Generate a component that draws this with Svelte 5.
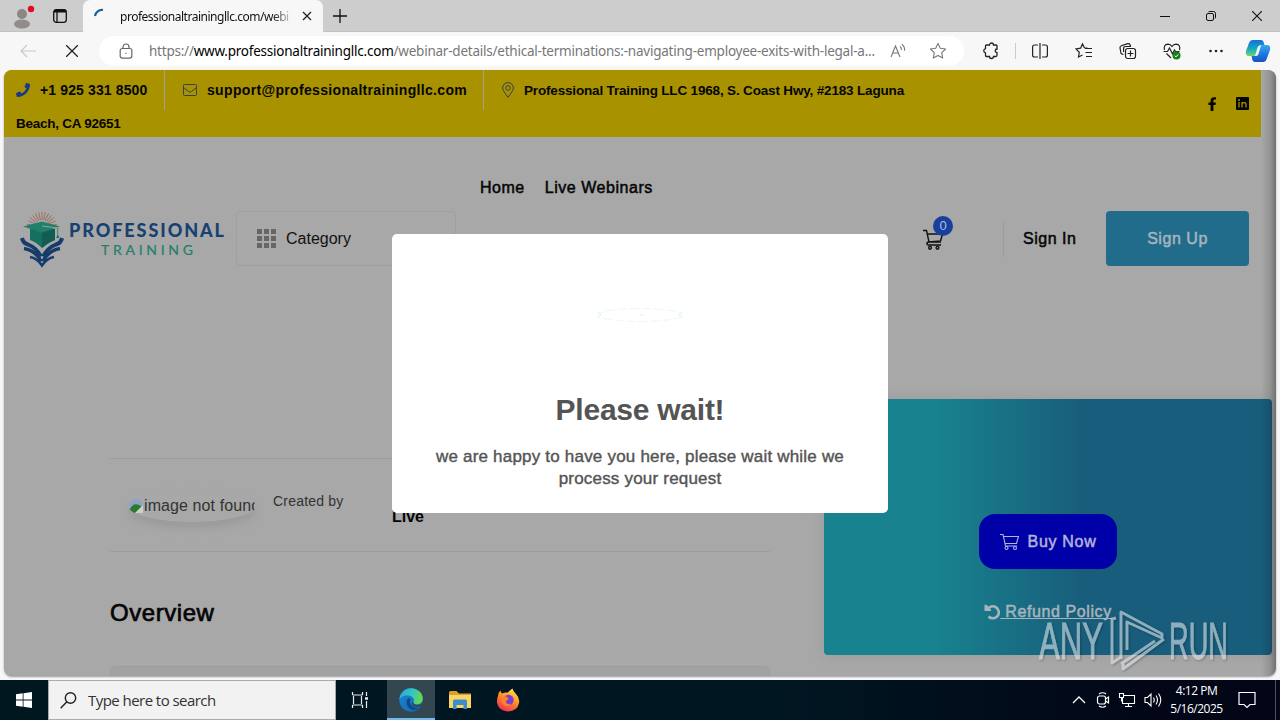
<!-- App.svelte -->
<script>
    const url = {
        host: 'www.professionaltrainingllc.com',
        path: '/webinar-details/ethical-terminations:-navigating-employee-exits-with-legal-a...'
    };

    const nav = [
        { text: 'Home', href: '#home' },
        { text: 'Live Webinars', href: '#webinars' }
    ];

    let cartCount = 0;

    // 3x3 dots of the category button
    const dots = [0, 1, 2, 3, 4, 5, 6, 7, 8];
    // rays above the cap in the logo
    const rays = [-80, -66, -52, -39, -26, -13, 0, 13, 26, 39, 52, 66, 80];
</script>

<div class="screen">
    <div class="tabbar">
        <div class="profile">
            <svg width="24" height="26" viewBox="0 0 24 26">
                <circle cx="10" cy="11" r="5" fill="#8c8684" />
                <ellipse cx="10" cy="21" rx="8" ry="4.500" fill="#918b89" />
                <circle cx="19" cy="6" r="3.200" fill="#e00b1c" />
            </svg>
        </div>
        <svg class="workspaces" width="16" height="16" viewBox="0 0 16 16">
            <rect x="1.700" y="1.700" width="12.600" height="12.600" rx="2.500" fill="none" stroke="#111" stroke-width="1.300" />
            <path d="M2 3.200h12" stroke="#111" stroke-width="2.600" />
            <path d="M5 3v11" stroke="#111" stroke-width="1.300" />
        </svg>
        <div class="tab">
            <svg width="16" height="16" viewBox="0 0 16 16">
                <path d="M2 8a7 7 0 0 1 8-6" fill="none" stroke="#17609a" stroke-width="2.200" />
            </svg>
            <span class="tab-title">professionaltrainingllc.com/webi</span>
            <svg width="10" height="10" viewBox="0 0 10 10"><path d="M1 1l8 8M9 1L1 9" stroke="#222" stroke-width="1.300" /></svg>
        </div>
        <svg class="new-tab" width="14" height="14" viewBox="0 0 14 14"><path d="M7 0v14M0 7h14" stroke="#111" stroke-width="1.300" /></svg>
        <div class="window-buttons">
            <svg width="10" height="10" viewBox="0 0 10 10"><path d="M0 5.500h10" stroke="#111" /></svg>
            <svg width="10" height="10" viewBox="0 0 10 10" fill="none" stroke="#111">
                <rect x=".5" y="2.500" width="7" height="7" rx="1.500" />
                <path d="M2.500.9q.5-.4 1.500-.4h3.500q2 0 2 2V6q0 1-.5 1.500" />
            </svg>
            <svg width="10" height="10" viewBox="0 0 10 10"><path d="M0 0l10 10M10 0L0 10" stroke="#111" stroke-width="1.100" /></svg>
        </div>
    </div>

    <div class="toolbar">
        <svg class="back" width="16" height="14" viewBox="0 0 16 14"><path d="M16 7H1M7 1L1 7l6 6" fill="none" stroke="#c9c9c9" stroke-width="1.200" /></svg>
        <svg class="stop" width="12" height="12" viewBox="0 0 12 12"><path d="M0 0l12 12M12 0L0 12" stroke="#222" stroke-width="1.300" /></svg>
        <div class="address">
            <svg width="14" height="16" viewBox="0 0 14 16" fill="none" stroke="#666" stroke-width="1.200">
                <rect x="1.200" y="5.500" width="11.600" height="9.600" rx="2" />
                <path d="M4 5.500V4a3 3 0 0 1 6 0v1.500" />
                <circle cx="7" cy="10.300" r=".7" fill="#666" stroke="none" />
            </svg>
            <span class="url">https://<b>{url.host}</b>{url.path}</span>
            <svg class="read" width="17" height="16" viewBox="0 0 17 16" fill="none" stroke="#777" stroke-width="1.100">
                <path d="M1 14L5.500 3 10 14M2.700 10h5.600M10 3.500q1.600 1.300 1.500 3.500M11.800 1.200q3.200 2.300 2.800 6.600" />
            </svg>
            <svg class="star" width="18" height="18" viewBox="0 0 18 18"><path d="M9 1.400l2.300 4.900 5.300.7-3.900 3.700 1 5.300L9 13.400 4.300 16l1-5.300L1.400 7l5.300-.7z" fill="none" stroke="#777" stroke-width="1.100" stroke-linejoin="round" /></svg>
        </div>
        <div class="tools">
            <svg width="18" height="18" viewBox="0 0 18 18" fill="none" stroke="#222" stroke-width="1.300">
                <path d="M4.500 3h3a2 2 0 0 1 4 0h2.500q1 0 1 1v3a1.800 1.800 0 0 0 0 3.600V13q0 1.500-1 1.500h-2.500a2 2 0 0 1-4 0h-3q-1 0-1-1v-2.600a2.200 2.200 0 0 1 0-4.300V4q0-1 1-1z" />
            </svg>
            <span class="tool-line"></span>
            <svg width="18" height="18" viewBox="0 0 18 18" fill="none" stroke="#222" stroke-width="1.200">
                <path d="M7 3H3.500Q1.600 3 1.600 5v8q0 2 1.900 2H7M11 3h3.500q1.900 0 1.900 2v8q0 2-1.900 2H11M9 1v16" />
            </svg>
            <svg width="18" height="18" viewBox="0 0 18 18" fill="none" stroke="#222" stroke-width="1.200">
                <path d="M9.500 6L7.500 2 5.600 6.200 1 7l3.300 3.300-.8 4.700 4-2M10 6.500h7M10.500 10.500H17M11 14.500h6M9.500 6h3" />
            </svg>
            <svg width="18" height="18" viewBox="0 0 18 18" fill="none" stroke="#222" stroke-width="1.200">
                <rect x="6.500" y="6.500" width="10" height="10" rx="2.200" />
                <path d="M11.500 8.500v6M8.500 11.500h6M4.500 12.500l-1.800-.6q-1.200-.5-.9-1.800L1 6q-.3-1.700 1.300-2.300l6.500-2q1.500-.4 2.200 1l.6 1.600M4.600 10V6.500q0-2 2-2h5.500" />
            </svg>
            <svg width="18" height="18" viewBox="0 0 18 18" fill="none" stroke="#222" stroke-width="1.200">
                <path d="M1.500 8Q.2 2.500 5 2.200 7.500 2.300 9 4.500q1.500-2.200 4-2.300Q17.800 2.500 16.500 8M3.500 11.500L8 16M.5 9.500h4L6.500 6l3 6 2-4 1 1.500h4" />
                <circle cx="13.500" cy="13.500" r="4" fill="#16801c" stroke="none" />
                <path d="M11.700 13.700l1.300 1.200 2.300-2.500" stroke="#fff" stroke-width="1" />
            </svg>
            <svg class="more" width="18" height="18" viewBox="0 0 18 18" fill="#222">
                <circle cx="3.500" cy="9" r="1.300" /><circle cx="9" cy="9" r="1.300" /><circle cx="14.500" cy="9" r="1.300" />
            </svg>
            <svg class="copilot" width="26" height="24" viewBox="0 0 26 24">
                <defs>
                    <linearGradient id="cp1" x1="0" y1="0" x2="0" y2="1"><stop offset="0" stop-color="#1b6fd0" /><stop offset=".5" stop-color="#12a3c8" /><stop offset="1" stop-color="#6cd66b" /></linearGradient>
                    <linearGradient id="cp2" x1="0" y1="0" x2="0" y2="1"><stop offset="0" stop-color="#3aa9ea" /><stop offset=".5" stop-color="#1f7be5" /><stop offset="1" stop-color="#1654c0" /></linearGradient>
                </defs>
                <path d="M8 1h8q2 0 2.600 2l.8 3h-3q-2 0-2.700 2l-2.500 7q-.8 2-3 2H4q-4 0-3-5L4 4q1-3 4-3z" fill="url(#cp1)" />
                <path d="M18 23h-8q-2 0-2.600-2l-.8-4h2q2.500 0 3.200-2l2.500-7q.8-2 3-2H22q4 0 3 5l-3 8q-1 4-4 4z" fill="url(#cp2)" />
                <path d="M12.500 8.500q.6-2 2.500-2h1l-2.500 8.500q-.6 2-2.500 2h-1z" fill="#e9f6fd" />
            </svg>
        </div>
    </div>

    <div class="page">
        <div class="topbar">
            <div class="contacts">
                <span class="phone">
                    <svg width="14" height="14" viewBox="0 0 512 512"><path fill="#173a8c" d="M493 25L389 1c-11-3-23 3-27 14l-48 112c-4 10-1 22 7 28l61 50c-36 76-98 139-177 177l-50-61c-7-8-18-11-28-7L15 362c-11 4-17 16-14 27l24 104c3 11 12 19 24 19 256 0 463-207 463-464 0-11-8-21-19-23z" /></svg>
                    +1 925 331 8500
                </span>
                <span class="mail">
                    <svg width="14" height="14" viewBox="0 0 14 14" fill="none" stroke="#39404d"><rect x=".5" y="1.500" width="13" height="11" rx="1" /><path d="M.5 4.500L5.500 8.500q1.500 1.200 3 0l5-4" /></svg>
                    support@professionaltrainingllc.com
                </span>
                <span class="pin">
                    <svg width="12" height="16" viewBox="0 0 12 16" fill="none" stroke="#39404d"><path d="M6 15.300Q.6 8.500.6 6a5.400 5.400 0 0 1 10.800 0Q11.400 8.500 6 15.300z" /><circle cx="6" cy="6" r="2.300" /></svg>
                    Professional Training LLC 1968, S. Coast Hwy, #2183 Laguna
                </span>
                <div class="second">Beach, CA 92651</div>
            </div>
            <div class="social">
                <svg width="9" height="14" viewBox="0 0 9 14"><path d="M2.600 14V8H.4V5.400h2.200V3.700Q2.600.2 6 .2h2v2.400H6.700q-1.300 0-1.300 1.300v1.500h2.500L7.500 8H5.400v6z" fill="#050505" /></svg>
                <svg width="13" height="13" viewBox="0 0 13 13">
                    <rect width="13" height="13" rx="1" fill="#050505" />
                    <path d="M3 5v5.500M6 5v5.500M6 7.500q0-1.800 2-1.800t2 1.800v3" fill="none" stroke="#a89200" stroke-width="1.300" />
                    <circle cx="3" cy="2.900" r="1" fill="#a89200" />
                </svg>
            </div>
        </div>

        <header>
            <svg class="logo" width="206" height="58" viewBox="0 0 206 58">
                <g stroke="#a06a5c" stroke-width=".9">
                    {#each rays as angle}
                        <path d="M22 2V10" transform="rotate({angle} 22 17)" />
                    {/each}
                </g>
                <path d="M10 19v11q6 2 12 8 7-6 13-8V19z" fill="#17705f" />
                <path d="M22 23v15q7-6 13-8V19z" fill="#125c54" />
                <path d="M3 16.500l19-5 18 5-18 6z" fill="#20806c" />
                <path d="M22 16l15.500 2v9" fill="none" stroke="#8fae9f" stroke-width=".9" />
                <path d="M37.500 18v7l-1.300 3h3l-1-3v-7z" fill="#17705f" />
                <g fill="none" stroke="#173c6b" stroke-width="4">
                    <path d="M2 28q1 5 6 6.500 8 3 13 12" />
                    <path d="M42 28q-1 5-6 6.500-8 3-13 12" />
                    <path d="M4 38.500q12 2 17 13" stroke-width="3.500" />
                    <path d="M40 38.500q-12 2-17 13" stroke-width="3.500" />
                    <path d="M10 47q7 1 12 8.500 5-7.500 12-8.500" stroke-width="2.500" />
                </g>
                <text x="49" y="26.500" class="logo-top" textLength="155">PROFESSIONAL</text>
                <text x="81" y="45" class="logo-sub" textLength="92">TRAINING</text>
            </svg>
            <button class="category">
                <span class="dots">{#each dots as dot}<i></i>{/each}</span>
                Category
            </button>
            <nav>
                {#each nav as item}
                    <a href={item.href}>{item.text}</a>
                {/each}
            </nav>
            <div class="cart">
                <svg width="21" height="22" viewBox="0 0 21 22" fill="none" stroke="#111" stroke-width="1.400">
                    <path d="M0 2.500h3.500L6 14h12M4.200 6h15.300l-2 7L5.700 14q-2 .3-1.800 1.900.1 1.100 1.600 1.100H18" />
                    <circle cx="7" cy="19.800" r="1.400" /><circle cx="14.500" cy="19.800" r="1.400" />
                </svg>
                <span class="badge">{cartCount}</span>
            </div>
            <div class="account">
                <span class="signin">Sign In</span>
                <button class="signup">Sign Up</button>
            </div>
        </header>

        <main>
            <section class="course">
                <div class="meta">
                    <div class="avatar">
                        <svg width="16" height="16" viewBox="0 0 16 16">
                            <path d="M1 1h10l4 4v10H1z" fill="#8fa3c4" />
                            <path d="M1 13Q5 3 13 8l2 2-5 5H1z" fill="#2c7a2e" />
                            <path d="M15 7l-8 8h8z" fill="#c9d4c6" />
                        </svg><span>image not found</span>
                    </div>
                    <span class="created">Created by</span>
                    <strong>Live</strong>
                </div>
                <h3>Overview</h3>
                <div class="panel"></div>
            </section>
            <aside>
                <button class="buy">
                    <svg width="19" height="18" viewBox="0 0 19 18" fill="none" stroke="#b3b3d8" stroke-width="1.100">
                        <path d="M0 1.500h3l2.500 11.500H17M3.500 3.500h15l-2 7H5" /><circle cx="6.500" cy="15" r="1.500" /><circle cx="15" cy="15" r="1.500" />
                    </svg>
                    Buy Now
                </button>
                <a class="refund" href="#refund">
                    <svg width="16" height="16" viewBox="0 0 16 16"><path d="M3.500 5.500A6 6 0 1 1 4.500 12.500" fill="none" stroke="#a7b4bc" stroke-width="2.600" /><path d="M.5.800V7H7V5.500L2.500.8z" fill="#a7b4bc" /></svg><span>&nbsp;Refund Policy</span>
                </a>
            </aside>
        </main>

        <div class="edge-shadow"></div>

        <div class="modal">
            <svg width="92" height="18" viewBox="0 0 92 18" fill="none" stroke="#e9f9f9">
                <ellipse cx="46" cy="9" rx="42" ry="6.500" stroke-dasharray="9 3" />
                <path d="M4 6l3 3-3 3M88 6l-3 3 3 3M46 9h4" stroke="#d8f3f4" />
            </svg>
            <h2>Please wait!</h2>
            <p>we are happy to have you here, please wait while we process your request</p>
        </div>
    </div>

    <svg class="watermark" width="196" height="64" viewBox="0 0 196 64">
        <text x="2" y="50.500" textLength="64" lengthAdjust="spacingAndGlyphs">ANY</text>
        <g fill="none" stroke="#dbe4e8" stroke-width="3" stroke-linejoin="round">
            <path d="M79 10l-4 1v44l9-6" />
            <path d="M84 51V4l41 22v4l-35-16v28M86 56v5l41-30M84 56l34-23" />
        </g>
        <text x="132" y="50.500" textLength="59" lengthAdjust="spacingAndGlyphs">RUN</text>
    </svg>

    <div class="taskbar">
        <div class="start">
            <svg width="16" height="16" viewBox="0 0 16 16" fill="#fff"><path d="M0 2.300L6.700 1.300v6.300H0zM7.500 1.200L16 0v7.600H7.500zM0 8.400h6.700v6.300L0 13.700zM7.500 8.400H16V16l-8.500-1.200z" /></svg>
        </div>
        <div class="search">
            <svg width="17" height="17" viewBox="0 0 17 17" fill="none" stroke="#222" stroke-width="1.400"><circle cx="10.500" cy="6" r="5.200" /><path d="M6.800 9.800L.7 16.200" /></svg>
            Type here to search
        </div>
        <div class="task">
            <svg width="18" height="18" viewBox="0 0 18 18" fill="none" stroke="#e8eef0" stroke-width="1.200"><path d="M1.500 1v3M11.500 1v3M1.500 4h10M1.500 17v-3M11.500 17v-3M1.500 14h10M2.500 5v8M10.500 5v8M15.500 1v4M15.500 10v7" /><path d="M14 7.500h3" stroke-width="2.500" /></svg>
        </div>
        <div class="task active">
            <svg width="24" height="24" viewBox="0 0 24 24">
                <defs>
                    <linearGradient id="eg1" x1="0" y1="0" x2="1" y2=".2"><stop offset="0" stop-color="#2aa5dc" /><stop offset=".6" stop-color="#35c6c0" /><stop offset="1" stop-color="#64d850" /></linearGradient>
                    <linearGradient id="eg2" x1="0" y1="0" x2="1" y2="1"><stop offset="0" stop-color="#1d86d4" /><stop offset="1" stop-color="#1263b5" /></linearGradient>
                </defs>
                <circle cx="12" cy="12" r="11.700" fill="url(#eg2)" />
                <path d="M.5 11.500A11.600 11.600 0 0 1 12 .3C19 .3 24 5.500 23.800 10.700c-.2 4.500-4 6.300-7.600 5.300-2.500-.7-1.200-1.800-1.300-3.700C14.700 9 11 7 7 7.500q-4.500.600-6.500 4z" fill="url(#eg1)" />
                <path d="M9 10q-3.500 6 1.500 10.500 4 3 10-.8-4 1-7.500-1.700-3.500-3-1.600-7z" fill="#0c4a80" />
                <path d="M14.500 15q-.2 2 4 2 3 0 4.800-1.800-.5 1.800-1.500 3-5 1.800-8-.7-1.500-2-.3-3.500z" fill="#32474f" />
            </svg>
        </div>
        <div class="task">
            <svg width="22" height="20" viewBox="0 0 22 20">
                <path d="M0 2.500Q0 1 1.500 1h6L10 3.500h12V7H0z" fill="#dd9f2b" />
                <path d="M0 5h22v13H0z" fill="#fbd466" />
                <path d="M4 11q0-1.500 1.500-1.500h11Q18 9.500 18 11v8h-3.500v-4h-7v4H4z" fill="#3b8dcc" />
            </svg>
        </div>
        <div class="task">
            <svg width="24" height="24" viewBox="0 0 24 24">
                <defs><linearGradient id="ff" x1=".8" y1="0" x2=".3" y2="1"><stop offset="0" stop-color="#ffe84a" /><stop offset=".5" stop-color="#ff8b25" /><stop offset="1" stop-color="#ef2c5b" /></linearGradient></defs>
                <path d="M2 8Q2.500 4 4.500 2.500q.3 2 1.500 3Q9 4 12 4.500 14 2 16.500.5q.5 3 3.500 5.500 4 4 3 9-1.500 8-11 8.500Q3 23 1.200 15.500.5 11 2 8z" fill="url(#ff)" />
                <circle cx="12.500" cy="12" r="5.200" fill="#7a3fd0" />
                <path d="M5.500 9.500q4-2.500 6.500.5 1 1.500-1 2.300-1.500.5-1 2.200 1.500 2.500 5 1-2.500 4-6.500 2Q4.500 14.500 5.500 9.500z" fill="#ff8226" />
            </svg>
        </div>
        <div class="tray">
            <svg width="14" height="8" viewBox="0 0 14 8"><path d="M1 7l6-6 6 6" fill="none" stroke="#fff" stroke-width="1.300" /></svg>
            <svg width="14" height="18" viewBox="0 0 14 18" fill="none" stroke="#fff" stroke-width="1.200"><rect x="1.500" y="5" width="8" height="8" rx="2" /><path d="M9.500 8l3-2v6l-3-2M3 3Q6.500.5 10 3M3 15q3.500 2.500 7 0" /></svg>
            <svg width="18" height="16" viewBox="0 0 18 16" fill="none" stroke="#fff" stroke-width="1.100"><path d="M6 3.500h10.500v8H4.500V6M10.500 11.500v3M7 14.500h7M1.500 1.500h4v4h-4zM3.500 5.500v4" /></svg>
            <svg width="18" height="16" viewBox="0 0 18 16" fill="none" stroke="#fff" stroke-width="1.100"><path d="M1 5.500h2.500L7 2v12l-3.500-3.500H1zM9.500 5.500q1.500 2.500 0 5M12 3.500q3 4.500 0 9M14.500 1.500q4.500 6.500 0 13" /></svg>
            <div class="clock"><span>4:12 PM</span><span>5/16/2025</span></div>
            <svg class="notes" width="18" height="18" viewBox="0 0 18 18" fill="none" stroke="#fff" stroke-width="1.200"><path d="M1 1.500h16v12h-5l-3 3-3-3H1z" /></svg>
            <span class="desktop"></span>
        </div>
    </div>
</div>

<style>
    :global(body) {
        margin: 0;
    }

    .screen {
        position: relative;
        display: flex;
        flex-direction: column;
        width: 1280px;
        height: 720px;
        overflow: hidden;
        background: #f7f7f7;
        font-family: "Liberation Sans", Arial, sans-serif;
    }

    svg {
        display: block;
        flex: none;
    }

    button {
        border: 0;
        padding: 0;
        font-family: inherit;
    }

    .tabbar {
        display: flex;
        align-items: center;
        flex: none;
        height: 32px;
        background: #cdcdcd;
        box-shadow: inset 0 -1px 0 #c2c2c2;
        font-family: "Noto Sans", "Open Sans", sans-serif;
    }

    .profile {
        margin: 0 16px 0 12px;
    }

    .workspaces {
        margin-right: 15px;
    }

    .tab {
        display: flex;
        align-items: center;
        box-sizing: border-box;
        width: 240px;
        height: 32px;
        padding: 0 11px 0 10px;
        border-radius: 7px 7px 0 0;
        background: #f7f7f7;
    }

    .tab-title {
        width: 176px;
        margin: 0 8px 0 11px;
        overflow: hidden;
        white-space: nowrap;
        font-size: 12px;
        letter-spacing: -0.48px;
        color: #111;
        mask-image: linear-gradient(90deg, #000 88%, transparent);
    }

    .new-tab {
        margin-left: 10px;
    }

    .window-buttons {
        display: flex;
        gap: 36px;
        margin-left: auto;
        padding-right: 18px;
    }

    .toolbar {
        display: flex;
        align-items: center;
        flex: none;
        height: 38px;
        font-family: "Noto Sans", "Open Sans", sans-serif;
    }

    .back {
        margin-left: 20px;
    }

    .stop {
        margin: 0 27px 0 30px;
    }

    .address {
        display: flex;
        align-items: center;
        box-sizing: border-box;
        width: 865px;
        height: 30px;
        margin-left: -6px;
        padding-left: 20px;
        border-radius: 15px;
        background: #fff;
    }

    .url {
        width: 724px;
        margin: 0 17px 1px 16px;
        white-space: nowrap;
        font-size: 13.5px;
        letter-spacing: -0.23px;
        color: #777;
    }

    .url b {
        font-weight: 400;
        color: #000;
    }

    .star {
        margin-left: 22px;
    }

    .tools {
        display: flex;
        align-items: center;
        gap: 26px;
        margin-left: 18px;
    }

    .tools > svg:nth-of-type(n + 2):nth-of-type(-n + 5) {
        position: relative;
        left: 2px;
    }

    .more {
        margin-left: 2px;
    }

    .tool-line {
        width: 1px;
        height: 16px;
        margin: 0 -13px 0 -11px;
        background: #ccc;
    }

    .copilot {
        margin-left: -6px;
    }

    .page {
        position: relative;
        flex: none;
        width: 1272px;
        height: 606px;
        margin-left: 4px;
        overflow: hidden;
        border-radius: 8px;
        background: #a8a8a8;
        box-shadow: 0 1px 2px #999;
        color: #050505;
    }

    .topbar {
        display: flex;
        justify-content: space-between;
        box-sizing: border-box;
        width: 1257px;
        height: 67px;
        padding: 0 12px;
        background: #a89200;
        font-size: 14px;
        font-weight: 700;
    }

    .contacts {
        display: flex;
        flex-wrap: wrap;
        width: 930px;
        height: 40px;
    }

    .contacts span {
        display: flex;
        align-items: center;
        box-sizing: border-box;
        height: 40px;
        white-space: nowrap;
    }

    .phone {
        gap: 10px;
        width: 149px;
        border-right: 1px solid #a8a38c;
        letter-spacing: 0.13px;
    }

    .mail {
        gap: 10px;
        width: 319px;
        padding-left: 18px;
        border-right: 1px solid #a8a38c;
        letter-spacing: 0.33px;
    }

    .pin {
        gap: 10px;
        padding-left: 18px;
        font-size: 13.5px;
        letter-spacing: -0.17px;
    }

    .second {
        width: 100%;
        line-height: 28px;
        font-size: 13.5px;
        letter-spacing: -0.25px;
    }

    .social {
        display: flex;
        align-items: center;
        gap: 19px;
    }

    header {
        display: flex;
        align-items: center;
        box-sizing: border-box;
        width: 1257px;
        height: 203px;
        padding: 0 12px 0 16px;
    }

    .logo-top {
        font: 900 18px Lato, sans-serif;
        fill: #174170;
    }

    .logo-sub {
        font: 400 14px Lato, sans-serif;
        fill: #237f6c;
        stroke: #237f6c;
        stroke-width: 0.2px;
    }

    .category {
        display: flex;
        align-items: center;
        gap: 10px;
        box-sizing: border-box;
        width: 220px;
        height: 55px;
        margin-left: 10px;
        padding-left: 20px;
        border: 1px solid #9f9f9f;
        border-radius: 4px;
        background: none;
        font-size: 16px;
        color: #111;
    }

    .dots {
        display: grid;
        grid-template-columns: repeat(3, 5px);
        gap: 2px;
    }

    .dots i {
        width: 5px;
        height: 5px;
        background: #666;
    }

    nav {
        display: flex;
        align-self: flex-start;
        gap: 20px;
        width: 443px;
        margin: 42px 0 0 24px;
    }

    nav a,
    .signin,
    .signup,
    .buy,
    .refund {
        font-size: 16px;
        letter-spacing: 0.53px;
        -webkit-text-stroke: 0.5px currentColor;
        text-decoration: none;
        color: #050505;
    }

    .cart {
        position: relative;
        width: 80px;
    }

    .badge {
        position: absolute;
        left: 10px;
        top: -12px;
        width: 20px;
        height: 20px;
        border-radius: 50%;
        background: #173f9e;
        font-size: 13px;
        line-height: 20px;
        text-align: center;
        color: #b3bddb;
    }

    .account {
        display: flex;
        align-items: center;
    }

    .signin {
        box-sizing: border-box;
        width: 103px;
        padding-left: 19px;
        border-left: 1px solid #9c9c9c;
        line-height: 36px;
    }

    .signup {
        width: 143px;
        height: 55px;
        border-radius: 4px;
        background: #226c8b;
        color: #a5b5bf;
    }

    main {
        display: flex;
        align-items: flex-start;
        padding: 70px 0 0 106px;
    }

    .course {
        width: 660px;
        padding-top: 48px;
    }

    .meta {
        display: flex;
        box-sizing: border-box;
        height: 94px;
        border: solid #9c9c9c;
        border-width: 1px 0;
    }

    .avatar {
        display: flex;
        align-items: center;
        width: 128px;
        height: 32px;
        margin: 31px 17px 0 18px;
        overflow: hidden;
        border-radius: 50%;
        box-shadow: 0 6px 10px #9a9a9a;
        white-space: nowrap;
        font-size: 16px;
        letter-spacing: 0.1px;
        color: #333;
    }

    .created {
        width: 119px;
        margin-top: 34px;
        font-size: 14px;
        letter-spacing: 0.2px;
        color: #333;
    }

    .meta strong {
        margin-top: 49px;
        font-size: 16px;
    }

    h3 {
        margin: 47px 0 0;
        font-size: 24px;
        line-height: 28px;
        font-weight: 400;
        letter-spacing: 0.55px;
        -webkit-text-stroke: 0.7px currentColor;
    }

    .panel {
        height: 80px;
        margin-top: 39px;
        border: 1px solid #9d9d9d;
        border-radius: 5px;
        background: #a2a2a2;
        box-sizing: border-box;
    }

    aside {
        display: flex;
        flex-direction: column;
        align-items: center;
        box-sizing: border-box;
        width: 448px;
        height: 256px;
        margin: -11px 0 0 54px;
        padding-top: 115px;
        border-radius: 4px;
        background: linear-gradient(90deg, #18828e 25%, #185d7b 58%);
        box-shadow: 0 0 14px #9a9a9a;
    }

    .course + aside {
        margin-top: 0;
        transform: translateY(-11px);
    }

    .buy {
        display: flex;
        align-items: center;
        justify-content: center;
        gap: 9px;
        width: 138px;
        height: 55px;
        flex: none;
        border-radius: 16px;
        background: #0000a8;
        letter-spacing: 0.7px;
        color: #b3b3d8;
    }

    .refund {
        display: flex;
        align-items: center;
        margin-top: 34px;
        letter-spacing: 0.6px;
        color: #a7b4bc;
    }

    .refund span {
        text-decoration: underline;
        text-decoration-skip-ink: none;
    }

    .edge-shadow {
        position: absolute;
        top: 0;
        right: 0;
        width: 15px;
        height: 100%;
        background: linear-gradient(90deg, rgba(0, 0, 0, 0), rgba(0, 0, 0, 0.12) 60%, rgba(0, 0, 0, 0.32));
    }

    .modal {
        position: absolute;
        left: 388px;
        top: 164px;
        display: flex;
        flex-direction: column;
        align-items: center;
        box-sizing: border-box;
        width: 496px;
        height: 279px;
        padding: 72px 34px 0;
        border-radius: 5px;
        background: #fff;
        text-align: center;
        color: #545454;
    }

    .modal h2 {
        margin: 68px 0 0;
        font-size: 30px;
        line-height: 36px;
        letter-spacing: -0.25px;
    }

    .modal p {
        margin: 18px 0 0;
        font-size: 17px;
        line-height: 22px;
        letter-spacing: 0.2px;
        -webkit-text-stroke: 0.4px currentColor;
    }

    .watermark {
        position: absolute;
        left: 1037px;
        top: 608px;
        opacity: 0.6;
        filter: drop-shadow(1px 1px 1px rgba(0, 0, 0, 0.4));
    }

    .watermark text {
        font: 52px "Liberation Sans", sans-serif;
        fill: #dbe4e8;
        stroke: #dbe4e8;
    }

    .taskbar {
        display: flex;
        flex: none;
        height: 40px;
        margin-top: 4px;
        background: linear-gradient(90deg, #001720, #001722 60%, #020617 90%);
        font-family: "Open Sans", "Noto Sans", sans-serif;
    }

    .start {
        display: flex;
        align-items: center;
        justify-content: center;
        width: 48px;
    }

    .search {
        display: flex;
        align-items: center;
        gap: 11px;
        box-sizing: border-box;
        width: 288px;
        padding-left: 11px;
        border: 1px solid #aaa;
        background: #f2f2f2;
        font-size: 15px;
        letter-spacing: -0.55px;
        color: #333;
    }

    .task {
        display: flex;
        align-items: center;
        justify-content: center;
        width: 48px;
    }

    .task.active {
        box-sizing: border-box;
        margin: 0 1px 0 3px;
        padding-top: 2px;
        border-bottom: 2px solid #76b9ed;
        background: #32474f;
    }

    .tray {
        display: flex;
        align-items: center;
        gap: 8px;
        margin-left: auto;
    }

    .tray > svg:first-child {
        margin-right: 2px;
    }

    .clock {
        display: flex;
        flex-direction: column;
        width: 53px;
        text-align: center;
        font-size: 12px;
        line-height: 18px;
        letter-spacing: -0.5px;
        white-space: nowrap;
        color: #fff;
    }

    .notes {
        margin: 0 11px 0 7px;
    }

    .desktop {
        width: 4px;
        height: 40px;
        border-left: 1px solid #4c535c;
    }
</style>
